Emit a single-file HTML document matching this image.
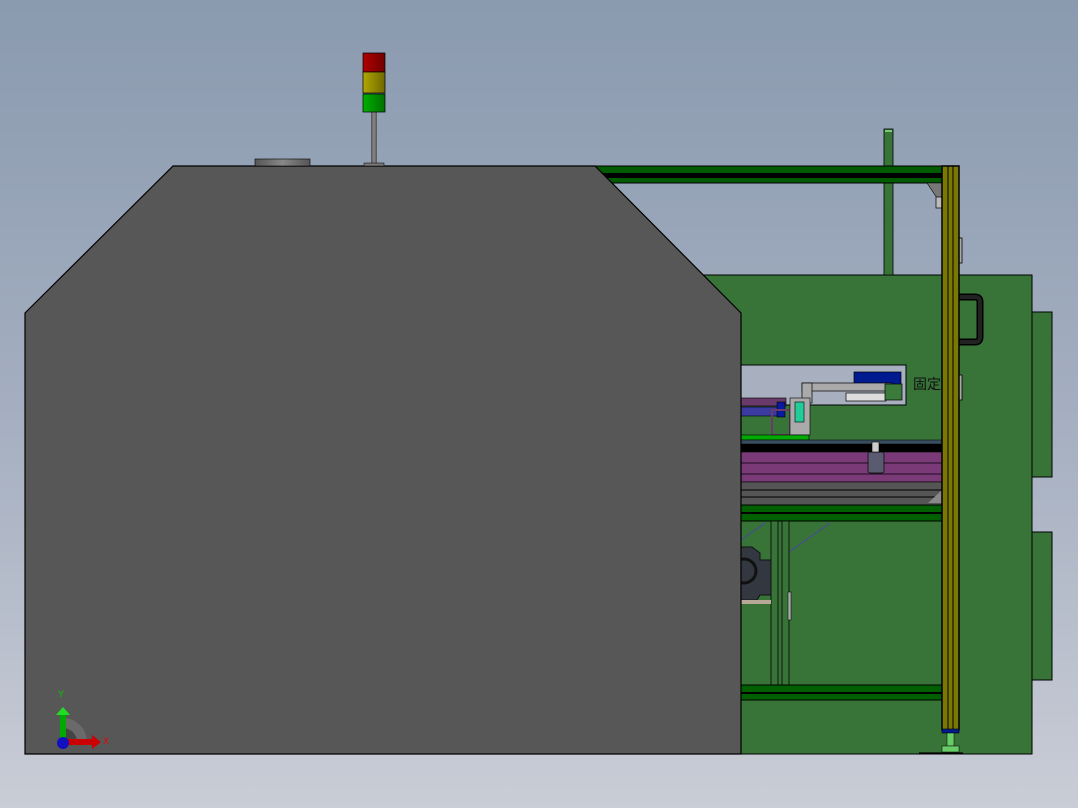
<!DOCTYPE html>
<html><head><meta charset="utf-8"><style>
html,body{margin:0;padding:0;width:1078px;height:808px;overflow:hidden}
body{background:linear-gradient(#8a9aaf 0%,#a4aec0 50%,#c9cdd6 100%)}
svg{position:absolute;left:0;top:0}
</style></head><body>
<svg width="1078" height="808" viewBox="0 0 1078 808" xmlns="http://www.w3.org/2000/svg">
<defs>
<linearGradient id="pole" x1="0" x2="1"><stop offset="0" stop-color="#555"/><stop offset=".5" stop-color="#888"/><stop offset="1" stop-color="#555"/></linearGradient>
<linearGradient id="red" x1="0" x2="1"><stop offset="0" stop-color="#b00000"/><stop offset="1" stop-color="#700000"/></linearGradient>
<linearGradient id="yel" x1="0" x2="1"><stop offset="0" stop-color="#b0a800"/><stop offset="1" stop-color="#706800"/></linearGradient>
<linearGradient id="grn" x1="0" x2="1"><stop offset="0" stop-color="#00b000"/><stop offset="1" stop-color="#007000"/></linearGradient>
</defs>
<!-- right tabs -->
<rect x="1032" y="312" width="20" height="165" fill="#387438" stroke="#000"/>
<rect x="1032" y="532" width="20" height="148" fill="#387438" stroke="#000"/>
<!-- green box -->
<rect x="700" y="275" width="332" height="479" fill="#387438" stroke="#000"/>
<!-- green pole -->
<rect x="884" y="129" width="9" height="146" fill="#387438" stroke="#000" stroke-width="0.8"/>
<rect x="885" y="130" width="7" height="2" fill="#7c7"/>
<!-- top beam -->
<rect x="595" y="166" width="347" height="17" fill="#005a00" stroke="#000"/>
<rect x="595" y="173" width="347" height="5" fill="#000"/>
<polygon points="927,183 942,183 942,198 937,198" fill="#777" stroke="#000" stroke-width="0.6"/>
<rect x="936" y="197" width="6" height="11" fill="#bbb" stroke="#000" stroke-width="0.7"/>
<!-- handle -->
<path d="M958,297 H975 Q980,297 980,302 V337 Q980,342 975,342 H958" fill="none" stroke="#000" stroke-width="7"/>
<path d="M958,297 H975 Q980,297 980,302 V337 Q980,342 975,342 H958" fill="none" stroke="#222" stroke-width="4"/>
<rect x="958" y="238" width="4" height="25" fill="#aaa" stroke="#000" stroke-width="0.8"/>
<rect x="958" y="375" width="4" height="25" fill="#aaa" stroke="#000" stroke-width="0.8"/>
<!-- light panel -->
<rect x="741" y="365" width="165" height="40" fill="#a8b0c0" stroke="#000"/>
<rect x="854" y="372" width="47" height="14" fill="#001a90" stroke="#000" stroke-width="0.7"/>
<rect x="802" y="383" width="90" height="8" fill="#aaa" stroke="#000" stroke-width="0.7"/>
<rect x="802" y="383" width="10" height="20" fill="#aaa" stroke="#000" stroke-width="0.7"/>
<rect x="846" y="393" width="40" height="8" fill="#ddd" stroke="#000" stroke-width="0.7"/>
<rect x="885" y="384" width="17" height="16" fill="#3a7a3a" stroke="#000" stroke-width="0.7"/>
<text x="913" y="389" font-family="'Liberation Sans','Noto Sans CJK SC',sans-serif" font-size="14" fill="#111">固定</text>
<!-- mechanism left -->
<rect x="741" y="398" width="45" height="8" fill="#6a3a6a" stroke="#000" stroke-width="0.6"/>
<rect x="741" y="407" width="40" height="9" fill="#3a3aa0" stroke="#000" stroke-width="0.6"/>
<rect x="777" y="402" width="8" height="15" fill="#0a1aa0" stroke="#000" stroke-width="0.6"/>
<rect x="772" y="410" width="18" height="25" fill="none" stroke="#6a3a6a" stroke-width="2"/>
<rect x="790" y="398" width="20" height="37" fill="#aaa" stroke="#000" stroke-width="0.6"/>
<rect x="795" y="402" width="9" height="20" fill="#2c9" stroke="#000" stroke-width="0.6"/>
<rect x="741" y="435" width="68" height="5" fill="#0a0" stroke="#000" stroke-width="0.6"/>
<!-- black bar + purple rails -->
<rect x="741" y="440" width="201" height="4" fill="#384e5e" stroke="#000" stroke-width="0.5"/>
<rect x="741" y="444" width="201" height="8" fill="#000"/>
<rect x="741" y="452" width="201" height="30" fill="#7a3a78" stroke="#000" stroke-width="0.6"/>
<line x1="741" y1="463" x2="942" y2="463" stroke="#000" stroke-width="0.8"/>
<line x1="741" y1="474" x2="942" y2="474" stroke="#000" stroke-width="0.8"/>
<rect x="868" y="452" width="16" height="21" rx="2" fill="#5a5a70" stroke="#000" stroke-width="0.7"/>
<rect x="872" y="442" width="7" height="10" fill="#ccc" stroke="#000" stroke-width="0.6"/>
<!-- gray rails -->
<rect x="741" y="482" width="201" height="23" fill="#555" stroke="#000" stroke-width="0.6"/>
<line x1="741" y1="490" x2="942" y2="490" stroke="#000"/>
<line x1="741" y1="497" x2="942" y2="497" stroke="#000"/>
<polygon points="928,503 942,490 942,503" fill="#888"/>
<!-- green beams -->
<rect x="741" y="505" width="201" height="16" fill="#006000" stroke="#000"/>
<line x1="741" y1="513" x2="942" y2="513" stroke="#000" stroke-width="2"/>
<line x1="741" y1="540" x2="765" y2="523" stroke="#44508a" stroke-width="1.2"/>
<line x1="789" y1="552" x2="830" y2="523" stroke="#44508a" stroke-width="1.2"/>
<!-- posts -->
<rect x="771" y="521" width="7" height="164" fill="#387438" stroke="#000" stroke-width="0.8"/>
<rect x="782" y="521" width="7" height="164" fill="#387438" stroke="#000" stroke-width="0.8"/>
<rect x="788" y="592" width="3" height="28" fill="#aaa" stroke="#000" stroke-width="0.5"/>
<!-- motor -->
<path d="M741,547 H752 L760,553 V560 H771 V595 H760 L757,600 H741 Z" fill="#333840" stroke="#111"/>
<circle cx="744" cy="571" r="12" fill="none" stroke="#111" stroke-width="3"/>
<rect x="741" y="600" width="30" height="4" fill="#b8a898"/>
<!-- lower beam -->
<rect x="741" y="685" width="201" height="15" fill="#006000" stroke="#000"/>
<line x1="741" y1="693" x2="942" y2="693" stroke="#000" stroke-width="2"/>
<!-- yellow column -->
<rect x="942" y="166" width="17" height="564" fill="#7a7800" stroke="#000" stroke-width="1.5"/>
<line x1="948" y1="166" x2="948" y2="730" stroke="#000" stroke-width="1"/>
<line x1="953" y1="166" x2="953" y2="730" stroke="#000" stroke-width="1"/>
<rect x="942" y="729" width="17" height="4" fill="#001a90" stroke="#000" stroke-width="0.6"/>
<rect x="947" y="733" width="7" height="13" fill="#6c6" stroke="#000" stroke-width="0.5"/>
<rect x="942" y="746" width="17" height="6" fill="#6c6" stroke="#000" stroke-width="0.5"/>
<line x1="919" y1="753" x2="963" y2="753" stroke="#000" stroke-width="1.2"/>
<!-- gray shell -->
<polygon points="25,313 173,166 595,166 741,313 741,754 25,754" fill="#575757" stroke="#000" stroke-width="1.2"/>
<!-- top items -->
<rect x="255" y="159" width="55" height="7" fill="url(#pole)" stroke="#000" stroke-width="0.6"/>
<rect x="371" y="112" width="6" height="51" fill="url(#pole)"/>
<rect x="364" y="163" width="20" height="3" fill="#777" stroke="#000" stroke-width="0.5"/>
<rect x="363" y="53" width="22" height="19" fill="url(#red)" stroke="#000" stroke-width="0.7"/>
<rect x="363" y="72" width="22" height="21" fill="url(#yel)" stroke="#000" stroke-width="0.7"/>
<rect x="363" y="94" width="22" height="18" fill="url(#grn)" stroke="#000" stroke-width="0.7"/>
<!-- triad -->
<path d="M63,735 V718 A24,24 0 0 1 87,742 H63 Z" fill="#6a6a6a"/>
<path d="M63,735 V728 A14,14 0 0 1 77,742 H63 Z" fill="#444"/>
<rect x="60" y="713" width="6" height="27" fill="#0a0"/>
<polygon points="56,715 63,707 70,715" fill="#2d2"/>
<rect x="63" y="739" width="30" height="6" fill="#c00"/>
<polygon points="92,735 101,742 92,749" fill="#c00"/>
<circle cx="63" cy="743" r="6" fill="#1010c0"/>
<text x="58" y="697" font-family="'Liberation Sans',sans-serif" font-size="9" fill="#0c0">Y</text>
<text x="103" y="744" font-family="'Liberation Sans',sans-serif" font-size="9" fill="#e00">X</text>
</svg>
</body></html>
